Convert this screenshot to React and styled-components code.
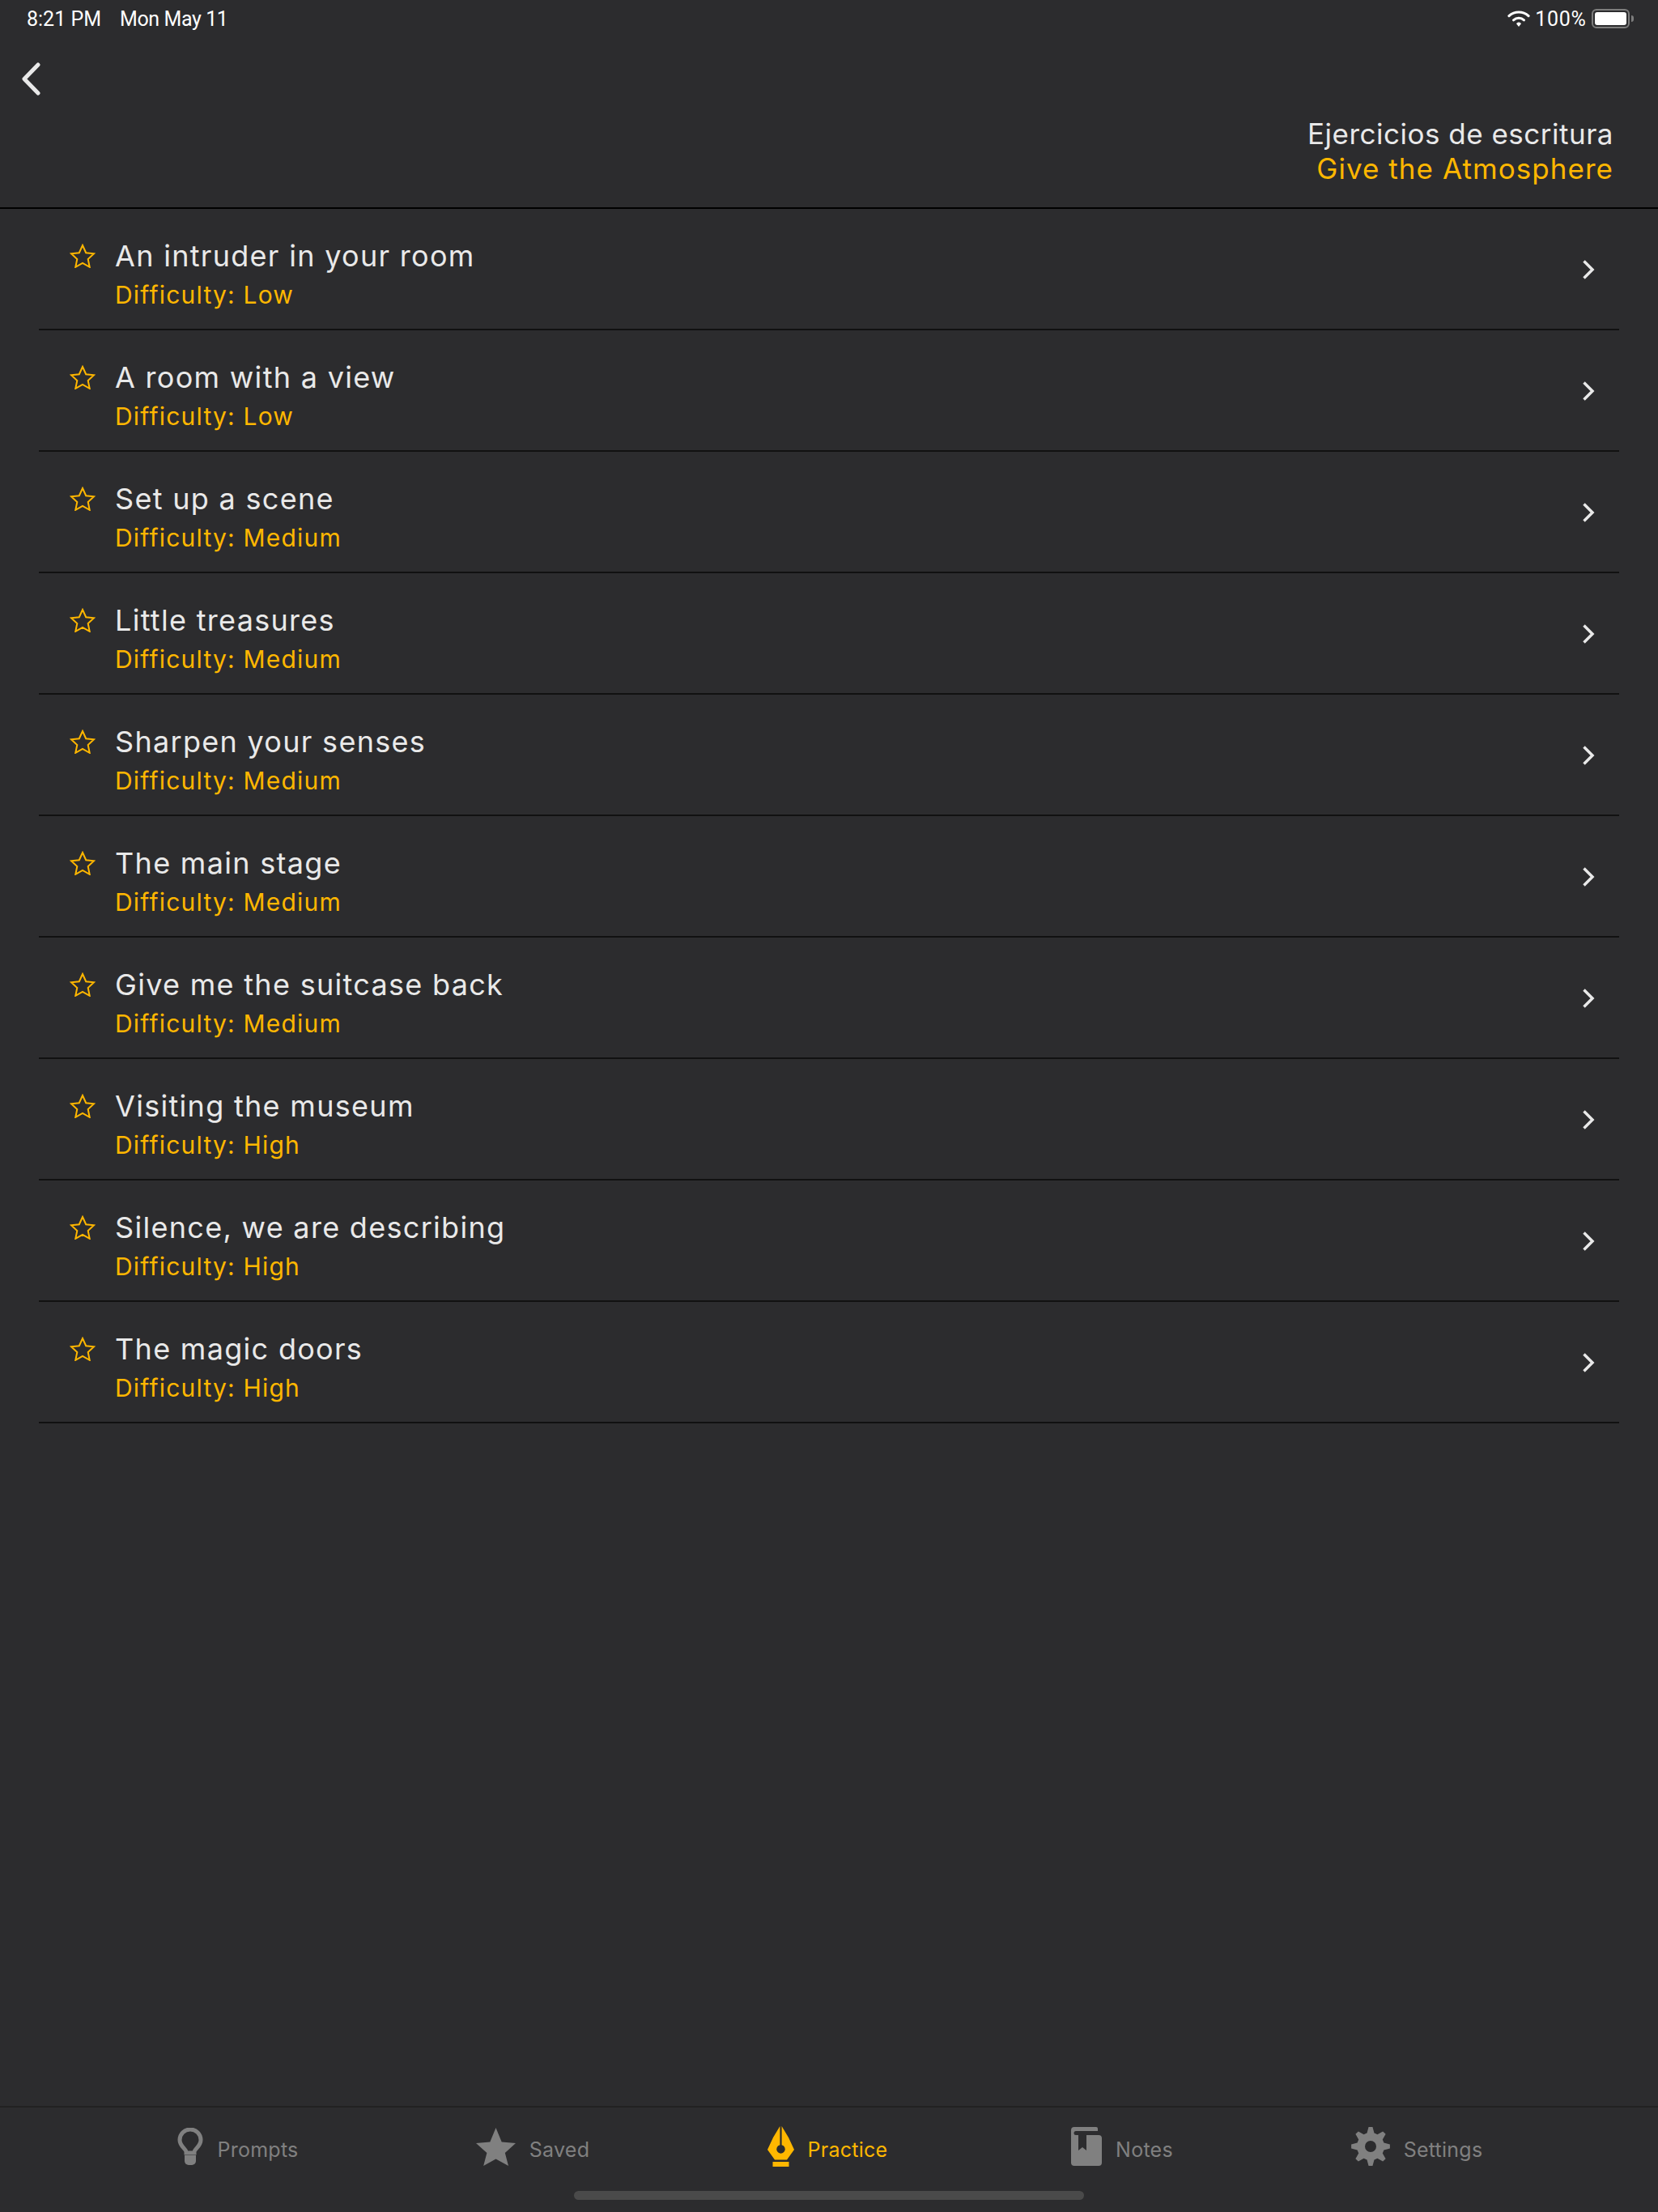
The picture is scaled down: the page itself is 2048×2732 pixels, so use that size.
import React from "react";
import styled, { createGlobalStyle } from "styled-components";

const GOLD = "#ffb700";
const GREY = "#808080";
const INK = "#e9e9e9";

const Global = createGlobalStyle`
  html, body { margin: 0; padding: 0; background: #2c2c2e; }
  * { box-sizing: border-box; }
`;

const Page = styled.div`
  width: 2048px;
  height: 2732px;
  display: flex;
  flex-direction: column;
  background: #2c2c2e;
  font-family: Inter, "Liberation Sans", sans-serif;
  overflow: hidden;
`;

const StatusBar = styled.div`
  height: 46px;
  padding: 0 35px 0 33px;
  display: flex;
  align-items: center;
  justify-content: space-between;
  color: #fff;
  font-family: Roboto, sans-serif;
  font-size: 25px;
`;

const StatusGroup = styled.div`
  display: flex;
  align-items: center;
  gap: ${(p) => p.$gap}px;
`;

const DateText = styled.span`
  letter-spacing: -0.4px;
`;

const BatteryText = styled.span`
  letter-spacing: 0.7px;
`;

const BatteryShell = styled.div`
  width: 47px;
  height: 24px;
  border: 2px solid #7d7d7d;
  border-radius: 6px;
  padding: 2px;
  position: relative;
  &::after {
    content: "";
    position: absolute;
    right: -7px;
    top: 6px;
    width: 3px;
    height: 8px;
    border-radius: 0 3px 3px 0;
    background: #7d7d7d;
  }
`;

const BatteryFill = styled.div`
  height: 100%;
  background: #fff;
  border-radius: 3px;
`;

const NavBar = styled.header`
  height: 212px;
  border-bottom: 2px solid #000;
  padding: 31px 55px 0 26px;
  display: flex;
  flex-direction: column;
`;

const BackIcon = styled.svg`
  width: 24px;
  height: 41px;
  display: block;
`;

const TitleBlock = styled.div`
  margin-top: 26px;
  text-align: right;
  font-size: 35px;
  line-height: 43px;
`;

const TitleLine = styled.div`
  color: ${(p) => (p.$accent ? GOLD : INK)};
  letter-spacing: ${(p) => (p.$accent ? 1.05 : 0.5)}px;
`;

const List = styled.main`
  flex: 1;
  padding: 0 48px;
`;

const Row = styled.div`
  height: 150px;
  border-bottom: 2px solid #111;
  display: flex;
  align-items: flex-start;
  padding: 0 30px 0 38px;
`;

const StarIcon = styled.svg`
  width: 32px;
  height: 30px;
  margin-top: 43px;
  flex: none;
`;

const RowText = styled.div`
  flex: 1;
  margin-left: 24px;
  padding-top: 35px;
`;

const RowTitle = styled.div`
  color: ${INK};
  font-size: 36px;
  line-height: 46px;
  letter-spacing: 1.3px;
`;

const RowSub = styled.div`
  color: ${GOLD};
  font-size: 30px;
  line-height: 42px;
  margin-top: 4px;
  letter-spacing: 1.2px;
`;

const Chevron = styled.svg`
  width: 16px;
  height: 26px;
  margin-top: 62px;
  flex: none;
`;

const TabBar = styled.footer`
  height: 131px;
  border-top: 2px solid #222;
  display: flex;
  flex-direction: column;
  align-items: center;
`;

const Tabs = styled.nav`
  width: 1820px;
  height: 103px;
  margin-right: 4px;
  display: grid;
  grid-template-columns: repeat(5, 1fr);
`;

const Tab = styled.div`
  display: flex;
  align-items: center;
  justify-content: center;
  gap: 17px;
  padding-bottom: 7px;
  color: ${(p) => (p.$active ? GOLD : GREY)};
  font-size: 25px;
`;

const TabLabel = styled.span`
  padding-top: 8px;
  letter-spacing: 0.25px;
`;

const HomeIndicator = styled.div`
  width: 630px;
  height: 11px;
  border-radius: 6px;
  background: #4a4a4a;
`;

const rows = [
  ["An intruder in your room", "Low"],
  ["A room with a view", "Low"],
  ["Set up a scene", "Medium"],
  ["Little treasures", "Medium"],
  ["Sharpen your senses", "Medium"],
  ["The main stage", "Medium"],
  ["Give me the suitcase back", "Medium"],
  ["Visiting the museum", "High"],
  ["Silence, we are describing", "High"],
  ["The magic doors", "High"],
];

const gearPath = (() => {
  const pts = [];
  const n = 8;
  for (let i = 0; i < n; i++) {
    const a = (i / n) * Math.PI * 2 - Math.PI / 2;
    const s = (Math.PI * 2) / n;
    [[-0.34, 17], [-0.13, 24], [0.13, 24], [0.34, 17]].forEach(([o, r]) => {
      const t = a + o * s;
      pts.push(`${(24 + r * Math.cos(t)).toFixed(2)} ${(24 + r * Math.sin(t)).toFixed(2)}`);
    });
  }
  return `M${pts.join("L")}Z M24 17a7 7 0 1 0 0 14a7 7 0 1 0 0-14Z`;
})();

const Bulb = () => (
  <svg width="32" height="46" viewBox="0 0 32 46">
    <path d="M11 30c0-4-8-7-8-15a13 13 0 0 1 26 0c0 8-8 11-8 15v1H11z" fill="none" stroke={GREY} strokeWidth="5" />
    <path d="M9 34h14v7a5 5 0 0 1-5 5h-4a5 5 0 0 1-5-5z" fill={GREY} />
  </svg>
);

const SolidStar = () => (
  <svg width="49" height="47" viewBox="0 0 49 47">
    <path d="M24.5 0l7.2 17.6 17.3 1.4-13.2 11.9 4.2 16.1-15.5-8.6L9.2 47l4.2-16.1L0 19l17.3-1.4z" fill={GREY} />
  </svg>
);

const Nib = () => (
  <svg width="33" height="50" viewBox="0 0 33 50">
    <path fillRule="evenodd" d="M15.4 0v23.200a5.300 5.300 0 1 0 2.200 0V0L26 14l7 15-9 12.500H9L0 29l7-15z" fill={GOLD} />
    <rect x="6.500" y="44" width="20" height="6" fill={GOLD} />
  </svg>
);

const Book = () => (
  <svg width="38" height="48" viewBox="0 0 38 48">
    <path fillRule="evenodd" d="M4 0h27a2 2 0 0 1 2 2v3H6a2 2 0 0 0 0 5h3v19l5-4 5 4V10h15a4 4 0 0 1 4 4v30a4 4 0 0 1-4 4H4a4 4 0 0 1-4-4V4a4 4 0 0 1 4-4z" fill={GREY} />
  </svg>
);

const Gear = () => (
  <svg width="48" height="48" viewBox="0 0 48 48">
    <path d={gearPath} fill={GREY} fillRule="evenodd" />
  </svg>
);

const Wifi = () => (
  <svg width="28" height="20" viewBox="0 0 28 20">
    <path d="M14 14.500a3.200 3.200 0 0 1 3 1.800L14 20l-3-3.700a3.200 3.200 0 0 1 3-1.800z" fill="#fff" />
    <path d="M7.500 11.800a9.800 9.800 0 0 1 13 0" fill="none" stroke="#fff" strokeWidth="3" strokeLinecap="round" />
    <path d="M2 6.600a18 18 0 0 1 24 0" fill="none" stroke="#fff" strokeWidth="3.200" strokeLinecap="round" />
  </svg>
);

export default function App() {
  return (
    <Page>
      <Global />
      <StatusBar>
        <StatusGroup $gap={23}>
          <span>8:21 PM</span>
          <DateText>Mon May 11</DateText>
        </StatusGroup>
        <StatusGroup $gap={6.5}>
          <Wifi />
          <BatteryText>100%</BatteryText>
          <BatteryShell>
            <BatteryFill />
          </BatteryShell>
        </StatusGroup>
      </StatusBar>
      <NavBar>
        <BackIcon viewBox="0 0 24 41">
          <path d="M21 3 4 20.500 21 38" fill="none" stroke={INK} strokeWidth="5" strokeLinecap="round" strokeLinejoin="round" />
        </BackIcon>
        <TitleBlock>
          <TitleLine>Ejercicios de escritura</TitleLine>
          <TitleLine $accent>Give the Atmosphere</TitleLine>
        </TitleBlock>
      </NavBar>
      <List>
        {rows.map(([title, level]) => (
          <Row key={title}>
            <StarIcon viewBox="0 0 32 30">
              <path d="M16 2l4.200 9.200 9.800 1.100-7.300 6.700 2 9.800-8.700-5-8.700 5 2-9.800L2 12.300l9.800-1.100z" fill="none" stroke={GOLD} strokeWidth="2" />
            </StarIcon>
            <RowText>
              <RowTitle>{title}</RowTitle>
              <RowSub>Difficulty: {level}</RowSub>
            </RowText>
            <Chevron viewBox="0 0 16 26">
              <path d="M2.500 2.500 13 13 2.500 23.500" fill="none" stroke={INK} strokeWidth="3.500" />
            </Chevron>
          </Row>
        ))}
      </List>
      <TabBar>
        <Tabs>
          <Tab><Bulb /><TabLabel>Prompts</TabLabel></Tab>
          <Tab><SolidStar /><TabLabel>Saved</TabLabel></Tab>
          <Tab $active><Nib /><TabLabel>Practice</TabLabel></Tab>
          <Tab><Book /><TabLabel>Notes</TabLabel></Tab>
          <Tab><Gear /><TabLabel>Settings</TabLabel></Tab>
        </Tabs>
        <HomeIndicator />
      </TabBar>
    </Page>
  );
}
